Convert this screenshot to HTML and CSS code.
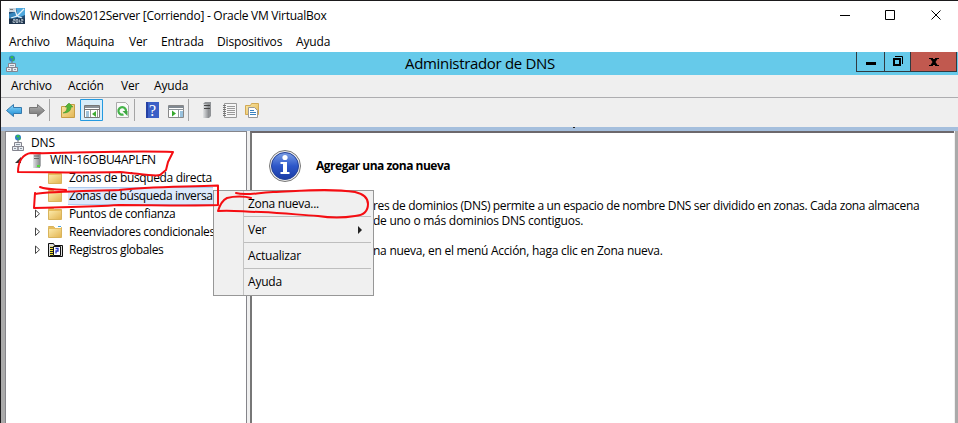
FILE: index.html
```
<!DOCTYPE html>
<html lang="es">
<head>
<meta charset="utf-8">
<title>Administrador de DNS</title>
<link rel="stylesheet" href="styles.css">
</head>
<body>
<svg width="0" height="0" class="defs">
  <defs>
    <linearGradient id="gold" x2="1" y2="1"><stop stop-color="#fbe9a9"/><stop offset="1" stop-color="#e3b653"/></linearGradient>
    <linearGradient id="blue" x2="0" y2="1"><stop stop-color="#8ed8fa"/><stop offset="1" stop-color="#178ad4"/></linearGradient>
    <linearGradient id="gray" x2="0" y2="1"><stop stop-color="#b5b5b5"/><stop offset="1" stop-color="#6f6f6f"/></linearGradient>
    <linearGradient id="metal" x2="1"><stop stop-color="#e2e4e6"/><stop offset="1" stop-color="#85888b"/></linearGradient>
    <linearGradient id="info" x2="0" y2="1"><stop stop-color="#7da0e6"/><stop offset=".5" stop-color="#2d57c9"/><stop offset="1" stop-color="#1b3ba4"/></linearGradient>
    <symbol id="folder" viewBox="0 0 16 16"><path d="M1.500 3.500V2.500h5l1 1h7v10h-13z" fill="#e6bd5e" stroke="#d9b45c"/><path d="M2 5h12v8H2z" fill="url(#gold)"/></symbol>
    <symbol id="dns" viewBox="0 0 16 18"><circle cx="6" cy="3.500" r="3" fill="#2f7fc4"/><path d="M4 2l2-1 2 1-2 2zM6 5l2-1 1 1-2 1z" fill="#36c43d"/><path d="M6 6v2" stroke="#777"/><path d="M2.500 8.500h7v4h-7zM.5 12.500h5.500v4H.5zM6 12.500h5.500v4H6z" fill="#e9edf2" stroke="#85858f"/><path d="M4 10.500h4M2 14.500h2M8 14.500h2" stroke="#8c98a5"/></symbol>
    <symbol id="server" viewBox="0 0 10 16"><path d="M1 2l2-2h6v14l-2 2H1z" fill="#a9acae"/><path d="M1 2h7v14H1z" fill="url(#metal)"/><path d="M2 4h5M2 6.500h5" stroke="#666"/></symbol>
  </defs>
</svg>
<div class="window">
  <header class="vm-title">
    <svg class="vm-icon" width="16" height="16" viewBox="0 0 16 16"><path d="M0 0h16v16H0z" fill="#244e78"/><path d="M7 0h9v7L9 10z" fill="#4fa8dd"/><path d="M0 6l6-2 3 4-4 4H0z" fill="#3787bd"/><path d="M0 0h7v4H0z" fill="#cbd4dc"/><path d="M1 1.500h3" stroke="#777"/><path d="M15 1L8 8 6 2M8 8l-6 2M8 8l5 2" fill="none" stroke="#e7f3fb" stroke-width="1.300"/><path d="M0 10.500h16V16H0z" fill="#1e344d"/><path d="M4 11.500h2v1.300H4v1.700h2M8 11.500v3M7 11.500h2v3H7zM10.500 11.500v3M12 11.500h2v1.300h-2v1.700h2" fill="none" stroke="#b8c5d0" stroke-width=".8"/></svg>
    <span class="vm-name">Windows2012Server [Corriendo] - Oracle VM VirtualBox</span>
    <svg class="vm-controls" width="102" height="12" viewBox="0 0 102 12"><path d="M0 5.500h10M45.500.5h9v9h-9zM91.500.5l9 9M100.500.5l-9 9" fill="none" stroke="#000"/></svg>
  </header>
  <nav class="vm-menu"><span>Archivo</span><span>Máquina</span><span>Ver</span><span>Entrada</span><span>Dispositivos</span><span>Ayuda</span></nav>
  <header class="app-title">
    <svg class="app-icon" width="16" height="18"><use href="#dns"/></svg>
    <h1>Administrador de DNS</h1>
    <div class="app-controls">
      <span class="min"><svg width="10" height="4"><path d="M0 0h10v3H0z"/></svg></span>
      <span class="restore"><svg width="10" height="11"><path d="M1 3h6v6H1z" fill="none" stroke="#000" stroke-width="2"/><path d="M2 .5h7.500V8" fill="none" stroke="#000"/></svg></span>
      <span class="close"><svg width="10" height="8"><path d="M0 0h4v1h2V0h4v1H8.500L6.500 4l2 3H10v1H6V7H4v1H0V7h1.500l2-3-2-3H0z"/></svg></span>
    </div>
  </header>
  <nav class="app-menu"><span>Archivo</span><span>Acción</span><span>Ver</span><span>Ayuda</span></nav>
  <div class="toolbar">
    <svg width="600" height="30" viewBox="0 98 600 30">
      <path d="M6.500 110.500l7-6v3h8v6h-8v3z" fill="url(#blue)" stroke="#3479ad"/>
      <path d="M44.500 110.500l-7-6v3h-8v6h8v3z" fill="url(#gray)" stroke="#777"/>
      <path d="M49.500 99v22M134.500 99v22M188.500 99v22" stroke="#a5a5a5"/>
      <path d="M61.500 106.500h5l1-2h7v13h-13z" fill="url(#gold)" stroke="#c69d45"/><path d="M63 113c3-1 4-3 4-6h-2l4-4 4 4h-2c0 4-3 6-8 6z" fill="#54b536" stroke="#3c8e2c" stroke-width=".5"/>
      <path d="M80.500 99.500h22v21h-22z" fill="#d8edfa" stroke="#249ae0"/><path d="M84.500 105.500h15v12h-15z" fill="#fff" stroke="#777"/><path d="M85 106h14v2H85z" fill="#8b9198"/><path d="M84 109.500h16" stroke="#777"/><path d="M86 112h3m-3 2h3m-3 2h3" stroke="#4386b7"/><path d="M90.500 110v7M97.500 110v7" stroke="#999"/><path d="M96 111v6l-4-3z" fill="#3dab32"/>
      <path d="M116.500 102.500h9l3 3v12h-12z" fill="#f9f9f9" stroke="#aaa"/><path d="M123.500 114.500a3.800 3.800 0 1 1 2.500-3" fill="none" stroke="#45b349" stroke-width="2.200"/><path d="M122.500 111h5v5z" fill="#3ca63f"/>
      <path d="M146 102h13v16h-13z" fill="#3b5fc6"/><path d="M146 102h2v16h-2z" fill="#2541a4"/><text class="help" x="149" y="116">?</text>
      <path d="M168.500 105.500h15v12h-15z" fill="#fff" stroke="#888"/><path d="M168 106h16v2h-16z" fill="#818991"/><path d="M168 109.500h16M178.500 110v7" stroke="#8d959b"/><path d="M172 110.500v6l4-3z" fill="#37a82d"/><path d="M180 112h3m-3 2h3m-3 2h3" stroke="#3485bc"/>
      <path d="M203 104l2-2h6v14l-2 2h-6z" fill="#909396"/><path d="M203 104h6v14h-6z" fill="url(#metal)"/><path d="M204 105.500h6M204 108.500h6" stroke="#444"/>
      <path d="M224.500 103.500h12v14h-12z" fill="#f6f6f6" stroke="#999"/><path d="M227 106.500h8m-8 2h8m-8 2h8m-8 2h8m-8 2h8" stroke="#999"/><path d="M223 105.500h3m-3 2h3m-3 2h3m-3 2h3m-3 2h3m-3 2h3" stroke="#777"/>
      <path d="M245.500 105.500h5l1-2h7v11h-13z" fill="url(#gold)" stroke="#d2a954"/><path d="M248.500 107.500h6l3 3v7h-9z" fill="#fff" stroke="#999"/><path d="M250 110.500h4m-4 2h6m-6 2h6" stroke="#3a82bf"/>
      <path d="M573 127h2v1h-2z" fill="#222"/>
    </svg>
  </div>
  <main class="workspace">
    <aside class="tree">
      <div class="row root"><svg width="16" height="18"><use href="#dns"/></svg><span>DNS</span></div>
      <div class="row host"><svg class="arrow" width="8" height="8"><path d="M6 1v6H0z" fill="#333"/></svg><svg class="srv" width="10" height="16"><use href="#server"/><path d="M5 13h3v2H5z" fill="#55d83d"/></svg><span>WIN-16OBU4APLFN</span></div>
      <div class="row"><i></i><svg width="16" height="16"><use href="#folder"/></svg><span>Zonas de búsqueda directa</span></div>
      <div class="row selected"><i></i><svg width="16" height="16"><use href="#folder"/></svg><span>Zonas de búsqueda inversa</span></div>
      <div class="row"><i><svg width="6" height="10"><path d="M.5 1v7.500l4-3.750z" fill="#fff" stroke="#444"/></svg></i><svg width="16" height="16"><use href="#folder"/></svg><span>Puntos de confianza</span></div>
      <div class="row"><i><svg width="6" height="10"><path d="M.5 1v7.500l4-3.750z" fill="#fff" stroke="#444"/></svg></i><svg width="16" height="16"><use href="#folder"/><path d="M8 2h6v2H8z" fill="#fff"/><path d="M11 2h3v1h-3z" fill="#4ca3dc"/></svg><span>Reenviadores condicionales</span></div>
      <div class="row"><i><svg width="6" height="10"><path d="M.5 1v7.500l4-3.750z" fill="#fff" stroke="#444"/></svg></i><svg width="16" height="16"><path d="M1.500 1.500h5l1 2h8v11h-14z" fill="#ddd" stroke="#111"/><path d="M3 4.500h6v9H3z" fill="#f1e338"/><path d="M3 5.500h3m-3 2h3m-3 2h3m-3 2h3M3 13.500h3" stroke="#222"/><path d="M6.500 4.500h7v9h-7z" fill="#fff" stroke="#111"/><path d="M9 11.500V9h2V6.500H8.500" fill="none" stroke="#2435c4" stroke-width="1.300"/></svg><span>Registros globales</span></div>
    </aside>
    <section class="details">
      <div class="heading">
        <svg width="34" height="34" viewBox="0 0 34 34"><circle cx="17" cy="17" r="15.500" fill="#eee" stroke="#777"/><circle cx="17" cy="17" r="13.500" fill="url(#info)" stroke="#234199"/><circle cx="17" cy="8.500" r="2.600" fill="#fff"/><path d="M12.500 13h6.500v10h2.500v2h-9v-2h2.500v-8h-2.500z" fill="#fff"/></svg>
        <h2>Agregar una zona nueva</h2>
      </div>
      <div class="copy">
        <p class="first">res de dominios (DNS) permite a un espacio de nombre DNS ser dividido en zonas. Cada zona almacena</p>
        <p>de uno o más dominios DNS contiguos.</p>
        <p class="last">na nueva, en el menú Acción, haga clic en Zona nueva.</p>
      </div>
    </section>
  </main>
  <div class="context-menu"><div>Zona nueva...</div><div>Ver<svg width="5" height="8"><path d="M0 0v8l4-4z" fill="#222"/></svg></div><div>Actualizar</div><div>Ayuda</div></div>
  <svg class="marks" width="958" height="423" viewBox="0 0 958 423">
    <path d="M18 172C18 161 23 154 31 153C70 154 122 150 173 152L168 162L166 170L160 175C155 177 135 173 120 172C80 173 50 172 18 172"/>
    <path d="M40 187C48 190 55 189 66 190M35 194C50 191 95 191 119 190C145 187 178 187 218 185.500L218 205C190 206 150 205 119 205C90 207 65 207 34 208L35 193"/>
    <path d="M236 193C245 196 254 193 273 192C300 191 330 188 355 192Q368 195 368 204Q368 215 355 216Q337 219 318 216C300 215 285 213 261 212C244 212 235 210 218 211Q221 201 227 198C234 196 245 196 251 198"/>
  </svg>
</div>
</body>
</html>
```
FILE: styles.css
```
* { box-sizing: border-box; }
body { margin: 0; font: 12px/18px "Open Sans", "Noto Sans", sans-serif; color: #000; }
h1, h2, p { margin: 0; font-weight: 400; }
svg { display: block; flex: none; }
.defs { position: absolute; }
.window { position: relative; display: flex; flex-direction: column; width: 958px; height: 423px; overflow: hidden; background: #fff; border-top: 1px solid #1b1a1c; border-left: 1px solid #1b1a1c; white-space: nowrap; }
.vm-title { display: flex; align-items: center; height: 30px; padding: 0 16px 0 8px; }
.vm-name { margin-left: 5px; letter-spacing: -.26px; }
.vm-controls { margin-left: auto; }
.vm-menu { display: grid; grid-template-columns: 57px 63px 32px 56px 79px auto; height: 21px; padding: 2px 0 0 8px; letter-spacing: -.15px; }
.app-title { display: flex; flex: none; height: 23px; background: #66caea; }
.app-icon { margin: 3px 0 0 5px; }
h1 { flex: 1; padding-left: 383px; font-size: 15px; line-height: 23px; letter-spacing: -.33px; }
.app-controls { display: flex; width: 101px; height: 20px; margin-right: 1px; border: 1px solid #303a40; border-top: 0; }
.app-controls span { display: flex; align-items: center; justify-content: center; width: 28px; border-right: 1px solid #303a40; }
.app-controls .min { padding-top: 5px; }
.app-controls .restore { width: 26px; }
.app-controls .close { flex: 1; background: #c1594f; border: 0; }
.app-menu { display: grid; grid-template-columns: 57px 53px 33px auto; flex: none; height: 23px; padding: 2px 0 0 10px; background: #efefef; border-bottom: 1px solid #adadb0; letter-spacing: -.15px; }
.toolbar { position: relative; z-index: 1; flex: none; height: 29px; background: #efefef; }
.toolbar svg { margin-left: -1px; }
.help { fill: #fff; font: 16px "Liberation Serif", serif; }
.workspace { display: grid; grid-template-columns: 242px 1fr; gap: 3px; height: 296px; padding: 4px 4px 0 4px; background: #f0f0f0; box-shadow: inset 0 4px #a5bfdd, inset 4px 0 #aaa, inset -3px 0 #aaa; }
.tree { overflow: hidden; padding-top: 2px; background: #fff; border: solid #85858a; border-width: 1px 1px 0; }
.row { display: flex; align-items: center; height: 18px; padding-left: 24px; letter-spacing: -.36px; }
.row.root { height: 17px; padding-left: 6px; letter-spacing: -.15px; }
.row.root span { margin-left: 3px; }
.row.host { padding-left: 9px; letter-spacing: -.28px; }
.row .srv { margin-left: 9px; }
.row.host span { margin-left: 8px; }
.row i { width: 17px; flex: none; padding-left: 5px; }
.row i + svg { margin-right: 6px; }
.row.selected span { padding-left: 1px; margin-left: -1px; background: #dce9fb; box-shadow: inset 0 1px #aecdf1, inset 0 -1px #aecdf1; letter-spacing: -.4px; }
.details { background: #fff; border-top: 2px solid #6c686c; border-left: 2px solid #777; }
.heading { display: flex; align-items: center; height: 64px; padding: 2px 0 0 16px; }
h2 { margin: 0 0 0 14px; font-size: 12px; font-weight: 700; letter-spacing: -.49px; }
.copy { padding: 1px 0 0 121px; line-height: 15px; letter-spacing: -.26px; }
.copy .first { letter-spacing: -.34px; }
.copy .last { margin-top: 15px; letter-spacing: -.25px; }
.context-menu { position: absolute; left: 212px; top: 189px; width: 161px; height: 106px; padding: 0 2px; background: linear-gradient(90deg, transparent 29px, #c4c4c4 29px, #c4c4c4 30px, transparent 30px) #f0f0f0; border: 1px solid #979797; }
.context-menu div { display: flex; align-items: center; height: 26px; margin-left: 28px; padding-left: 4px; border-bottom: 1px solid #bebebe; letter-spacing: -.2px; }
.context-menu div:first-child { letter-spacing: -.3px; }
.context-menu div:last-child { border: 0; }
.context-menu svg { margin: 0 8px 0 auto; }
.marks { position: absolute; z-index: 2; left: -1px; top: -1px; fill: none; stroke: #f50d12; stroke-width: 2; stroke-linejoin: round; stroke-linecap: round; }
```
